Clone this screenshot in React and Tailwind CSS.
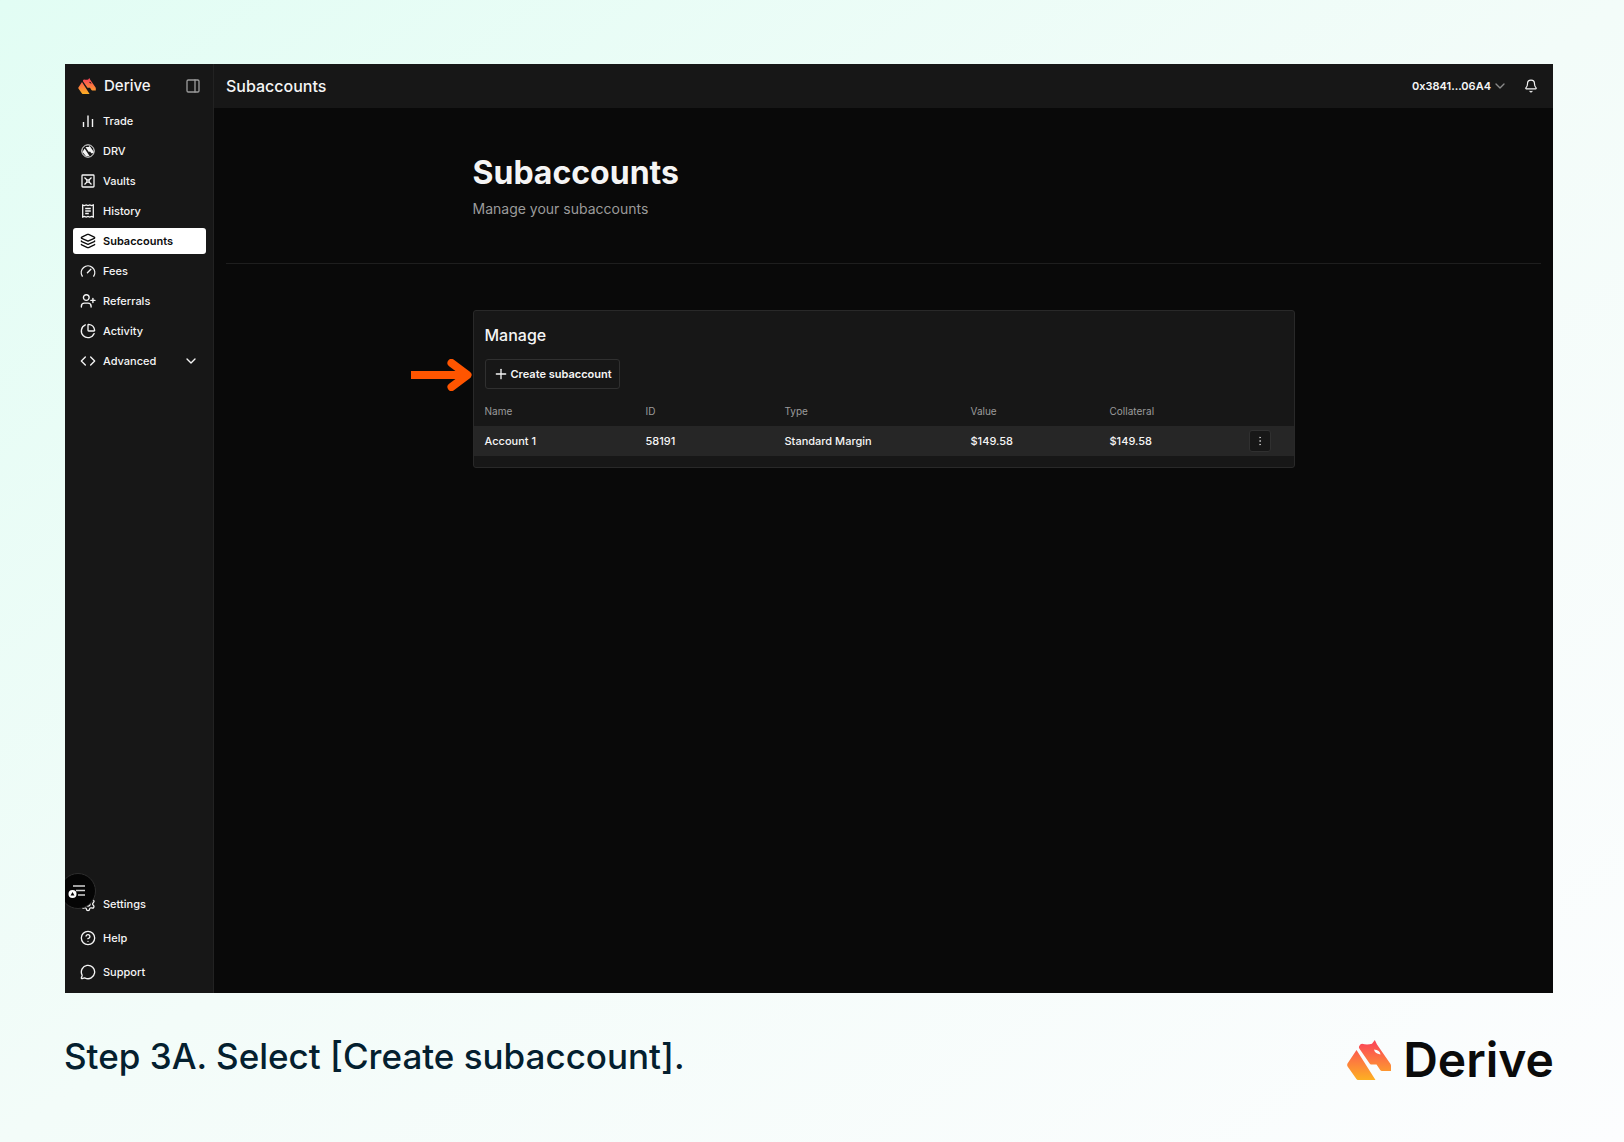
import {
  Bell,
  ChartPie,
  ChevronDown,
  CircleHelp,
  Code,
  EllipsisVertical,
  Layers,
  MessageCircle,
  PanelRight,
  Plus,
  Settings,
} from "lucide-react";

const mainLinks = [
  { label: "Trade", icon: TradeIcon },
  { label: "DRV", icon: DrvIcon },
  { label: "Vaults", icon: VaultIcon },
  { label: "History", icon: HistoryIcon },
  { label: "Subaccounts", icon: Layers, active: true },
  { label: "Fees", icon: GaugeIcon },
  { label: "Referrals", icon: ReferralIcon },
  { label: "Activity", icon: ChartPie },
];

const footerLinks = [
  { label: "Settings", icon: Settings },
  { label: "Help", icon: CircleHelp },
  { label: "Support", icon: MessageCircle },
];

const accounts = [
  { name: "Account 1", id: "58191", type: "Standard Margin", value: "$149.58", collateral: "$149.58" },
];

export default function App() {
  return (
    <div className="flex min-h-screen flex-col bg-linear-to-br from-[#e2fdf4] via-[#f3fcf9] to-[#fcfdfe] px-16 pt-16 font-[Inter,sans-serif]">
      <div className="mr-[7px] ml-px flex min-h-[929px] bg-[#090909] text-[#f5f5f5]">
        <Sidebar />
        <div className="flex min-w-0 flex-1 flex-col">
          <TopBar />
          <main className="flex-1 px-3">
            {/* Page heading */}
            <section className="border-b border-[#1e1e1e] pt-[45px] pb-11">
              <div className="mx-auto max-w-[822px]">
                <h1 className="text-[32px] leading-10 font-bold">Subaccounts</h1>
                <p className="mt-1.5 text-[14px] leading-5 text-[#9b9b9b]">Manage your subaccounts</p>
              </div>
            </section>
            <ManageCard />
          </main>
        </div>
      </div>

      {/* Caption */}
      <footer className="flex items-start justify-between pt-[35px] pr-[6px]">
        <p className="text-[35px] leading-[56px] font-medium text-[#04202f]">
          Step 3A. Select [Create subaccount].
        </p>
        <div className="flex items-center gap-3 pt-1 text-[#0b0b0b]">
          <DeriveMark id="footer-mark" className="h-10 w-11" />
          <span className="text-[48px] leading-[56px] font-semibold">Derive</span>
        </div>
      </footer>
    </div>
  );
}

function Sidebar() {
  return (
    <aside className="relative flex w-[149px] shrink-0 flex-col border-r border-[#222] bg-[#171717]">
      <div className="flex h-11 items-center pr-3 pl-[13px]">
        <DeriveMark id="side-mark" className="h-4 w-[18px]" />
        <span className="ml-2 text-[15px] font-medium">Derive</span>
        <button type="button" aria-label="Toggle sidebar" className="ml-auto text-[#9b9b9b]">
          <PanelRight className="size-4" strokeWidth={2} />
        </button>
      </div>

      <nav className="flex flex-col gap-1 pr-[7px] pl-2">
        {mainLinks.map((item) => (
          <NavItem key={item.label} {...item} />
        ))}
        <button type="button" className="flex h-[26px] items-center gap-[7px] px-[7px] text-[11px] font-medium">
          <Code className="size-4" strokeWidth={2} />
          Advanced
          <ChevronDown className="ml-auto size-4" strokeWidth={2} />
        </button>
      </nav>

      <nav className="mt-auto flex flex-col gap-2 pr-[7px] pb-2 pl-2">
        {footerLinks.map((item) => (
          <NavItem key={item.label} {...item} />
        ))}
      </nav>

      {/* Floating menu bubble, cut off by the window edge */}
      <div className="absolute bottom-[84px] left-0 h-9 w-[31px] overflow-hidden">
        <button
          type="button"
          aria-label="Open menu"
          className="absolute right-0 flex size-9 items-center justify-center rounded-full border border-[#2e2e2e] bg-[#050505] pr-0.5"
        >
          <BubbleIcon />
        </button>
      </div>
    </aside>
  );
}

function NavItem({ label, icon: Icon, active }) {
  return (
    <a
      href="#"
      className={`flex h-[26px] items-center gap-[7px] rounded-[3px] px-[7px] text-[11px] ${
        active ? "bg-white font-semibold text-[#0c0c0c]" : "font-medium"
      }`}
    >
      <Icon className="size-4" strokeWidth={2} />
      {label}
    </a>
  );
}

function TopBar() {
  return (
    <header className="flex h-11 items-center bg-[#171717] px-3">
      <span className="text-[16px] font-medium">Subaccounts</span>
      <button type="button" className="ml-auto flex items-center gap-px text-[11px] font-semibold">
        0x3841...06A4
        <ChevronDown className="size-4 text-[#8a8a8a]" strokeWidth={2} />
      </button>
      <button type="button" aria-label="Notifications" className="mr-[3px] ml-4">
        <Bell className="size-[14px]" strokeWidth={2} />
      </button>
    </header>
  );
}

function ManageCard() {
  return (
    <section className="relative mx-auto mt-[46px] max-w-[822px] rounded-[3px] border border-[#292929] bg-[#171717] pb-[11px]">
      <h2 className="px-[11px] pt-3 text-[16px] leading-6 font-medium">Manage</h2>
      <button
        type="button"
        className="mt-3 ml-[11px] flex h-[30px] items-center gap-0.5 rounded-[3px] border border-[#303030] px-[7px] text-[11px] font-semibold"
      >
        <Plus className="size-4" strokeWidth={2} />
        Create subaccount
      </button>

      <table className="mt-2 w-full table-fixed text-left text-[11px]">
        <colgroup>
          <col className="w-[172px]" />
          <col className="w-[139px]" />
          <col className="w-[186px]" />
          <col className="w-[139px]" />
          <col className="w-[139px]" />
          <col />
        </colgroup>
        <thead className="text-[10px] text-[#9b9b9b]">
          <tr className="h-[29px]">
            <th className="pl-[11px] font-normal">Name</th>
            <th className="font-normal">ID</th>
            <th className="font-normal">Type</th>
            <th className="font-normal">Value</th>
            <th className="font-normal">Collateral</th>
            <th aria-label="Actions" />
          </tr>
        </thead>
        <tbody>
          {accounts.map((a) => (
            <tr key={a.id} className="h-[30px] bg-[#262626] font-medium">
              <td className="pl-[11px]">{a.name}</td>
              <td>{a.id}</td>
              <td>{a.type}</td>
              <td>{a.value}</td>
              <td>{a.collateral}</td>
              <td>
                <button
                  type="button"
                  aria-label="Account actions"
                  className="flex size-[22px] items-center justify-center rounded-[3px] border border-[#303030] bg-[#171717] text-[#c4c4c4]"
                >
                  <EllipsisVertical className="size-3" strokeWidth={1.5} />
                </button>
              </td>
            </tr>
          ))}
        </tbody>
      </table>

      {/* Pointer to the create button */}
      <svg
        viewBox="0 0 62 32"
        className="absolute top-12 -left-[63px] h-8 w-[62px]"
        fill="none"
        stroke="#ff5500"
        strokeWidth="8"
      >
        <path d="M0 16H54" />
        <path d="M40.500 4 56.500 16 40.500 28" strokeLinecap="round" strokeLinejoin="round" />
      </svg>
    </section>
  );
}

/* Logos and icons */

function DeriveMark({ id, className }) {
  return (
    <svg viewBox="0 0 44 40" className={className} aria-hidden="true">
      <defs>
        <linearGradient id={id} x1="0" y1="0" x2="0" y2="40" gradientUnits="userSpaceOnUse">
          <stop offset="0.100" stopColor="#fb4a55" />
          <stop offset="0.500" stopColor="#fd7840" />
          <stop offset="1" stopColor="#fdb022" />
        </linearGradient>
      </defs>
      <path d="M9.500 10 28.500 40H11Q10 40 9.400 39L0.600 26.500Q-0.200 25 0.500 23.500Z" fill={`url(#${id})`} />
      <path
        fillRule="evenodd"
        d="M12 6.500Q13 4 15 3.800 20 5 25 3.800L27.800 0 30 4.500 43.500 24Q44 25 44 26V31H35Q33.800 31 33.200 30L29.500 24.500H24Q23.300 24.500 22.800 23.800L12.300 8.500Q11.700 7.500 12 6.500ZM27 9.500Q27.500 13.500 33.500 14.500 33 10 27 9.500Z"
        fill={`url(#${id})`}
      />
    </svg>
  );
}

function TradeIcon({ className }) {
  return (
    <svg viewBox="-1 -1 16 16" className={className} fill="none" stroke="currentColor" strokeWidth="1.400">
      <path d="M2.500 8V13M7 1.500V13M11.500 5V13" />
    </svg>
  );
}

function DrvIcon({ className }) {
  return (
    <svg viewBox="-1 -1 16 16" className={className}>
      <circle cx="7" cy="7" r="6.200" fill="none" stroke="currentColor" />
      <path
        d="M3.600 4.600 8.500 12H4.800L1.500 8ZM4.500 3H7.500L8.800 2 12.500 7.500V9.300H10.300L9.200 7.800H7.600Z"
        fill="currentColor"
      />
    </svg>
  );
}

function VaultIcon({ className }) {
  return (
    <svg viewBox="-1 -1 16 16" className={className} fill="none" stroke="currentColor" strokeWidth="1.300">
      <rect x="1" y="1" width="12" height="12" rx="0.800" />
      <path d="M3.500 3.500 10.500 10.500M10.500 3.500 3.500 10.500" />
      <circle cx="7" cy="7" r="1.200" fill="#171717" />
    </svg>
  );
}

function HistoryIcon({ className }) {
  return (
    <svg viewBox="-1 -1 16 16" className={className} fill="none" stroke="currentColor" strokeWidth="1.300">
      <path d="M1.700 1 3.500 1.600 5.200 1 7 1.600 8.800 1 10.500 1.600 12.300 1V13L10.500 12.400 8.800 13 7 12.400 5.200 13 3.500 12.400 1.700 13Z" />
      <path d="M4.200 4.500H9.800M4.200 7H9.800M4.200 9.500H7.800" />
    </svg>
  );
}

function GaugeIcon({ className }) {
  return (
    <svg
      viewBox="0 0 14 14"
      className={className}
      fill="none"
      stroke="currentColor"
      strokeWidth="1.200"
      strokeLinecap="round"
    >
      <path d="M2 11.500A5.900 5.900 0 1 1 12 11.500M6.500 8.500 9.500 5.500" />
    </svg>
  );
}

function ReferralIcon({ className }) {
  return (
    <svg
      viewBox="0 0 14 14"
      className={className}
      fill="none"
      stroke="currentColor"
      strokeWidth="1.200"
      strokeLinecap="round"
    >
      <circle cx="5.500" cy="4" r="2.500" />
      <path d="M1.200 12.300V11.500A2.700 2.700 0 0 1 3.900 8.900H7A2.700 2.700 0 0 1 9.700 11.500V12.300M11.300 4.700V8.300M9.500 6.500H13.100" />
    </svg>
  );
}

function BubbleIcon() {
  return (
    <svg viewBox="0 0 18 14" className="h-[14px] w-[18px]" fill="none" stroke="#d4d4d4" strokeWidth="1.300">
      <path d="M5 2H17M8 6.500H17M10 11H17" />
      <circle cx="4.500" cy="10" r="4" fill="#fff" stroke="none" />
      <path d="M4.500 8 6.500 11.500H2.500Z" fill="#050505" stroke="none" />
    </svg>
  );
}
